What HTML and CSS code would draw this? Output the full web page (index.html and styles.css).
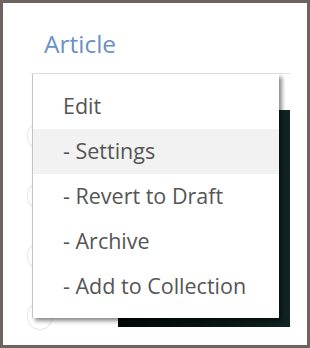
FILE: index.html
```html
<!DOCTYPE html>
<html>
<head>
<meta charset="utf-8">
<link rel="stylesheet" href="styles.css">
</head>
<body>
<div class="frame">
  <h1 class="title">Article</h1>
  <div class="panel">
    <div class="choices">
      <span class="ring"></span>
      <span class="ring"></span>
      <span class="ring"></span>
      <span class="ring"></span>
    </div>
    <div class="cover"></div>
  </div>
  <ul class="menu">
    <li class="item">Edit</li>
    <li class="item active">- Settings</li>
    <li class="item">- Revert to Draft</li>
    <li class="item">- Archive</li>
    <li class="item">- Add to Collection</li>
  </ul>
</div>
</body>
</html>
```
FILE: styles.css
```css
html, body {
  margin: 0;
  padding: 0;
  background: #ffffff;
}
.frame {
  position: relative;
  width: 310px;
  height: 348px;
  box-sizing: border-box;
  border: 3px solid #6f6360;
  background: #ffffff;
  overflow: hidden;
  font-family: "Open Sans", "Noto Sans", sans-serif;
}
.title {
  margin: 0;
  padding: 26px 0 0 41px;
  font-size: 24.5px;
  line-height: 30px;
  font-weight: 400;
  color: #6a90c6;
}
.panel {
  margin: 14px 17px 0 28px;
  border-top: 1px solid #e2e2e2;
  display: flex;
  padding-top: 36px;
}
.choices {
  width: 87px;
  flex: none;
  display: flex;
  flex-direction: column;
  gap: 32px;
  margin-left: -4px;
  padding-top: 12px;
}
.ring {
  display: block;
  width: 24px;
  height: 26px;
  border: 1px solid #e6e6e6;
  border-radius: 50%;
}
.cover {
  flex: 1;
  height: 217px;
  margin-left: 4px;
  background: linear-gradient(90deg, #030808 0%, #0a1919 70%, #112424 100%);
}
.menu {
  position: absolute;
  left: 29px;
  top: 71px;
  width: 246px;
  margin: 0;
  padding: 10px 0 9px;
  list-style: none;
  background: #ffffff;
  border-left: 1px solid #c4c4c4;
  box-shadow: 3px 3px 4px rgba(0, 0, 0, 0.45);
}
.item {
  height: 45px;
  line-height: 43px;
  padding-left: 30px;
  font-size: 21.5px;
  color: #555555;
}
.item.active {
  background: #f2f2f2;
}
```
